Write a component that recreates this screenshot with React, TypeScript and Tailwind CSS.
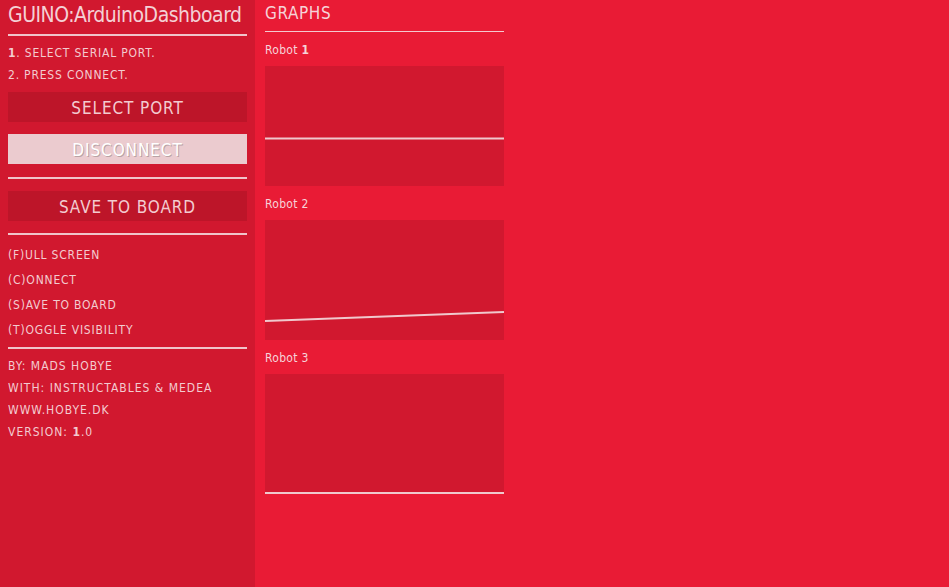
const font = { fontFamily: '"DejaVu Sans Condensed", "DejaVu Sans", sans-serif' };

function Divider() {
  return <div className="h-[2px] bg-[#f0c4ca]" />;
}

function PanelButton({ label, light }: { label: string; light?: boolean }) {
  return (
    <button
      className={
        light
          ? "h-[30px] w-full bg-[#ebcbcf] pt-[3px] text-[17px] tracking-[0.9px] text-white [text-shadow:1px_1px_0_#b9a2a5]"
          : "h-[30px] w-full bg-[#bd1529] pt-[3px] text-[17px] tracking-[0.9px] text-[#f3cbd0]"
      }
    >
      {label}
    </button>
  );
}

function Graph({ name, bold, line }: { name: string; bold?: boolean; line: React.ReactNode }) {
  return (
    <div className="flex flex-col">
      <div className="h-[34px] pt-[10px] text-[12px] leading-[16px] tracking-[0.3px] text-[#f6d3d8]">
        Robot <span className={bold ? "font-bold" : ""}>{name}</span>
      </div>
      <div className="relative h-[120px] w-[239px] bg-[#d1182f]">
        <svg className="absolute inset-0" width="239" height="120" viewBox="0 0 239 120">
          {line}
        </svg>
      </div>
    </div>
  );
}

export default function App() {
  return (
    <div className="flex h-screen w-full bg-[#e91b35] text-[#f3cbd0]" style={font}>
      {/* Sidebar */}
      <aside className="flex w-[255px] flex-col bg-[#d1182f] pl-[8px] pr-[8px]">
        <h1 className="pt-[1px] text-[21px] leading-[28px] tracking-[-0.5px] text-[#f4d0d5]">
          GUINO:ArduinoDashboard
        </h1>
        <div className="mt-[5px]">
          <Divider />
        </div>

        <div className="mt-[9px] flex flex-col gap-[6px] text-[12px] leading-[16px] tracking-[0.8px]">
          <p>
            <span className="font-bold">1</span>. SELECT SERIAL PORT.
          </p>
          <p>2. PRESS CONNECT.</p>
        </div>

        <div className="mt-[9px] flex flex-col gap-[12px]">
          <PanelButton label="SELECT PORT" />
          <PanelButton label="DISCONNECT" light />
        </div>

        <div className="mt-[13px]">
          <Divider />
        </div>
        <div className="mt-[12px]">
          <PanelButton label="SAVE TO BOARD" />
        </div>
        <div className="mt-[12px]">
          <Divider />
        </div>

        <ul className="mt-[12px] flex flex-col gap-[9px] text-[12px] leading-[16px] tracking-[0.8px]">
          <li>(F)ULL SCREEN</li>
          <li>(C)ONNECT</li>
          <li>(S)AVE TO BOARD</li>
          <li>(T)OGGLE VISIBILITY</li>
        </ul>

        <div className="mt-[9px]">
          <Divider />
        </div>

        <div className="mt-[9px] flex flex-col gap-[6px] text-[12px] leading-[16px] tracking-[1px]">
          <p>BY: MADS HOBYE</p>
          <p>WITH: INSTRUCTABLES &amp; MEDEA</p>
          <p>WWW.HOBYE.DK</p>
          <p>
            VERSION: <span className="font-bold">1</span>.0
          </p>
        </div>
      </aside>

      {/* Graphs */}
      <main className="flex flex-col pl-[10px]">
        <h2 className="pt-[2px] text-[17px] leading-[22px] tracking-[0.6px] text-[#f6d3d8]">GRAPHS</h2>
        <div className="mt-[7px] h-px w-[239px] bg-[#f4c9cf]" />
        <Graph
          name="1"
          bold
          line={<line x1="0" y1="72.5" x2="239" y2="72.5" stroke="#f0c8cd" strokeWidth="2" />}
        />
        <Graph
          name="2"
          line={<line x1="0" y1="101" x2="239" y2="92" stroke="#f0c8cd" strokeWidth="2" />}
        />
        <Graph
          name="3"
          line={<line x1="0" y1="119" x2="239" y2="119" stroke="#f0c8cd" strokeWidth="2" />}
        />
      </main>
    </div>
  );
}
